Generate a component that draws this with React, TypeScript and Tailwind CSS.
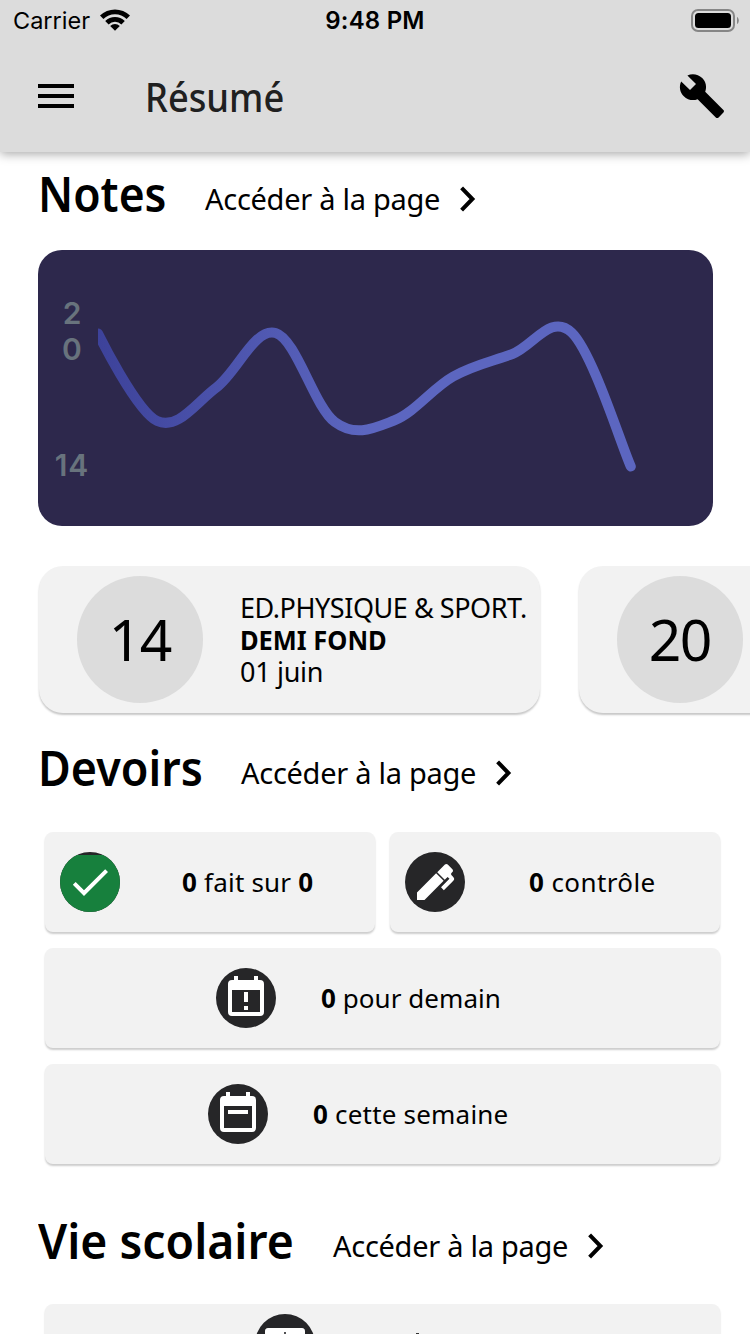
import React from "react";
import { MdBuild, MdCheck, MdMenu } from "react-icons/md";

const grades = [333, 420.5, 387, 332.5, 421.5, 420, 376, 353.5, 332, 466];

function curve(values: number[]) {
  const pts = values.map((v, i) => ({ x: 60 + i * 59.2, y: v - 249.5 }));
  const s = 0.35;
  let d = `M${pts[0].x} ${pts[0].y}`;
  let tx = 0;
  let ty = 0;
  for (let i = 1; i < pts.length; i++) {
    const prev = pts[i - 1];
    const cur = pts[i];
    const next = pts[Math.min(i + 1, pts.length - 1)];
    const c1x = prev.x + tx;
    const c1y = prev.y + ty;
    tx = ((next.x - prev.x) / 2) * s;
    ty = ((next.y - prev.y) / 2) * s;
    d += ` C${c1x} ${c1y} ${cur.x - tx} ${cur.y - ty} ${cur.x} ${cur.y}`;
  }
  return d;
}

function StatusBar() {
  return (
    <div className="flex h-10 items-center justify-between pr-[11px] pl-[13px] font-['Inter'] text-[24px] leading-none text-black">
      <div className="flex w-[280px] items-center">
        <span className="w-[87px] pt-[2px] text-[23.5px] tracking-[0px] whitespace-nowrap">Carrier</span>
        <svg width="30" height="22" viewBox="0 0 30 22">
          <path d="M0 6.6 A21.5 21.5 0 0 1 30 6.6 L26.6 10 A16.6 16.6 0 0 0 3.4 10 Z" />
          <path d="M5.2 12 A14 14 0 0 1 24.8 12 L21.4 15.4 A9.2 9.2 0 0 0 8.6 15.4 Z" />
          <path d="M10.2 17 A7 7 0 0 1 19.8 17 L15 21.8 Z" />
        </svg>
      </div>
      <span className="pt-[2px] pr-[2px] font-semibold tracking-[0.2px] whitespace-nowrap">9:48 PM</span>
      <div className="flex w-[280px] justify-end">
        <svg width="48" height="23" viewBox="0 0 48 23">
          <rect x="1" y="1" width="42" height="21" rx="6" fill="none" stroke="#868686" strokeWidth="2" />
          <rect x="4" y="4" width="36" height="15" rx="3.5" />
          <path d="M46 8v7c2.4-1 2.4-6 0-7z" fill="#868686" />
        </svg>
      </div>
    </div>
  );
}

function SectionHeader({ title, width, stretch }: { title: string; width: string; stretch: string }) {
  return (
    <div className="flex h-[60px] pl-[38px] text-black">
      <div className={"shrink-0 " + width}>
        <h2 className={"inline-block origin-left pt-[2px] text-[48px] leading-[60px] font-semibold whitespace-nowrap " + stretch}>
          {title}
        </h2>
      </div>
      <div className="flex h-[60px] items-center pt-[13px]">
        <span className="w-[255px] origin-left text-[29px] tracking-[-0.28px] whitespace-nowrap">Accéder à la page</span>
        <svg width="16" height="26" viewBox="0 0 16 26" fill="none" stroke="black" strokeWidth="4">
          <path d="M1.6 1.8 L12.4 13 L1.6 24.2" />
        </svg>
      </div>
    </div>
  );
}

function GradeCard({ value, children }: { value: string; children?: React.ReactNode }) {
  return (
    <div className="flex h-[147px] w-[501px] shrink-0 items-center rounded-[24px] bg-[#f2f2f2] pl-[37.5px] shadow-[0_2px_2px_rgba(0,0,0,0.22)]">
      <div className="flex size-[126.5px] items-center justify-center rounded-full bg-[#dcdcdc] pb-px text-[57px] leading-none tracking-[-1.5px]">
        {value}
      </div>
      <div className="pl-[37px] text-[27px] leading-8 whitespace-nowrap">{children}</div>
    </div>
  );
}

const tile = "flex h-[100px] items-center rounded-[8px] bg-[#f2f2f2] shadow-[0_2px_2px_rgba(0,0,0,0.2)]";
const disc = "flex size-[60px] shrink-0 items-center justify-center overflow-hidden rounded-full bg-[#262628] text-white";

export default function App() {
  return (
    <div className="flex h-[1334px] w-[750px] flex-col overflow-hidden bg-white font-['Noto_Sans',sans-serif] text-black">
      <header className="relative h-[152px] shrink-0 bg-[#dcdcdc] shadow-[0_2px_10px_rgba(0,0,0,0.35)]">
        <StatusBar />
        <div className="flex h-28 items-center pr-6 pl-8">
          <MdMenu className="size-12" />
          <h1 className="ml-[65px] origin-left scale-x-[0.93] pt-[2px] text-[39px] font-medium whitespace-nowrap text-[#202020]">Résumé</h1>
          <MdBuild className="ml-auto size-12" />
        </div>
      </header>

      <section className="pt-[10px]">
        <SectionHeader title="Notes" width="w-[167px]" stretch="scale-x-[0.925]" />
        <div className="mt-7 ml-[37.5px] flex h-[275.5px] w-[675px] rounded-[24px] bg-[#2d284c]">
          <div className="flex w-[60px] flex-col pt-[45px] pl-[9px] text-center font-['Inter'] text-[30px] leading-9 font-semibold text-[#68737d]">
            <span>2</span>
            <span>0</span>
            <span className="mt-20 tracking-[0.8px]">14</span>
          </div>
          <svg className="-ml-[60px]" width="675" height="275" viewBox="0 0 675 275" fill="none">
            <defs>
              <linearGradient id="line" gradientUnits="userSpaceOnUse" x1="60" y1="0" x2="593" y2="0">
                <stop offset="0" stopColor="#3d429a" />
                <stop offset="0.5" stopColor="#5c66c0" />
                <stop offset="1" stopColor="#5c66c0" />
              </linearGradient>
              <clipPath id="area">
                <rect x="60" y="0" width="600" height="275" />
              </clipPath>
            </defs>
            <path d={curve(grades)} stroke="url(#line)" strokeWidth="10" strokeLinecap="round" clipPath="url(#area)" />
          </svg>
        </div>
        <div className="mt-[40.5px] ml-[39px] flex gap-[39px]">
          <GradeCard value="14">
            <div className="tracking-[-0.45px]">ED.PHYSIQUE &amp; SPORT.</div>
            <div className="origin-left scale-x-[0.942] font-bold">DEMI FOND</div>
            <div className="tracking-[-0.3px]">01 juin</div>
          </GradeCard>
          <GradeCard value="20" />
        </div>
      </section>

      <section className="pt-[23px]">
        <SectionHeader title="Devoirs" width="w-[203px]" stretch="scale-x-[0.935]" />
        <div className="mt-9 ml-[45px] grid w-[675px] grid-cols-2 gap-x-[15px] gap-y-4 text-[26px] tracking-[0.2px]">
          <div className={tile + " pl-[15px]"}>
            <div className={disc}>
              <div className="mt-[3px] flex h-[57px] w-[60px] shrink-0 items-center justify-center bg-[#17803d] pb-[3px]">
                <MdCheck className="size-12 shrink-0" />
              </div>
            </div>
            <span className="pl-[62px] whitespace-nowrap"><b>0</b> fait sur <b>0</b></span>
          </div>
          <div className={tile + " pl-[15px]"}>
            <div className={disc}>
              <svg width="48" height="48" viewBox="0 0 24 24" fill="currentColor">
                <path d="M20.71 7.04C20.37 7.38 20.04 7.71 20.03 8.04C20 8.36 20.34 8.69 20.66 9C21.14 9.5 21.61 9.95 21.59 10.44C21.57 10.93 21.06 11.44 20.55 11.94L16.42 16.08L15 14.66L19.25 10.42L18.29 9.46L16.87 10.87L13.12 7.12L16.96 3.29C17.35 2.9 18 2.9 18.37 3.29L20.71 5.63C21.1 6 21.1 6.65 20.71 7.04M3 17.25L12.56 7.68L16.31 11.43L6.75 21H3V17.25Z" />
              </svg>
            </div>
            <span className="pl-[64px] tracking-[0.4px] whitespace-nowrap"><b>0</b> contrôle</span>
          </div>
          <div className={tile + " col-span-2 pl-[171px]"}>
            <div className={disc}>
              <svg width="48" height="48" viewBox="0 0 24 24" fill="currentColor">
                <path d="M19 3H18V1H16V3H8V1H6V3H5A2 2 0 0 0 3 5V19A2 2 0 0 0 5 21H19A2 2 0 0 0 21 19V5A2 2 0 0 0 19 3M19 19H5V8H19V19M11 9H13V14H11V9M11 16H13V18H11V16" />
              </svg>
            </div>
            <span className="pl-[45px] tracking-[0.05px] whitespace-nowrap"><b>0</b> pour demain</span>
          </div>
          <div className={tile + " col-span-2 pl-[163px]"}>
            <div className={disc}>
              <svg width="48" height="48" viewBox="0 0 24 24" fill="currentColor">
                <path d="M19 3H18V1H16V3H8V1H6V3H5A2 2 0 0 0 3 5V19A2 2 0 0 0 5 21H19A2 2 0 0 0 21 19V5A2 2 0 0 0 19 3M19 19H5V8H19V19M7 10H17V12H7V10" />
              </svg>
            </div>
            <span className="pl-[45px] whitespace-nowrap"><b>0</b> cette semaine</span>
          </div>
        </div>
      </section>

      <section className="pt-[45px]">
        <SectionHeader title="Vie scolaire" width="w-[295px]" stretch="scale-x-[0.965]" />
        <div className="mt-[35px] ml-[45px] flex h-20 w-[675px] items-center rounded-[8px] bg-[#f2f2f2] pl-[210px] shadow-[0_2px_2px_rgba(0,0,0,0.2)]">
          <div className={disc}>
            <svg width="48" height="48" viewBox="0 0 24 24" fill="currentColor">
              <path d="M3.5 4H20.5A1.6 1.6 0 0 1 22 5.6V20H2V5.6A1.6 1.6 0 0 1 3.5 4M11.6 6V9H12.4V6Z" fillRule="evenodd" />
            </svg>
          </div>
          <div className="mb-[21px] ml-[101px] h-[2px] w-[3px] bg-[#333333]" />
        </div>
      </section>
    </div>
  );
}
